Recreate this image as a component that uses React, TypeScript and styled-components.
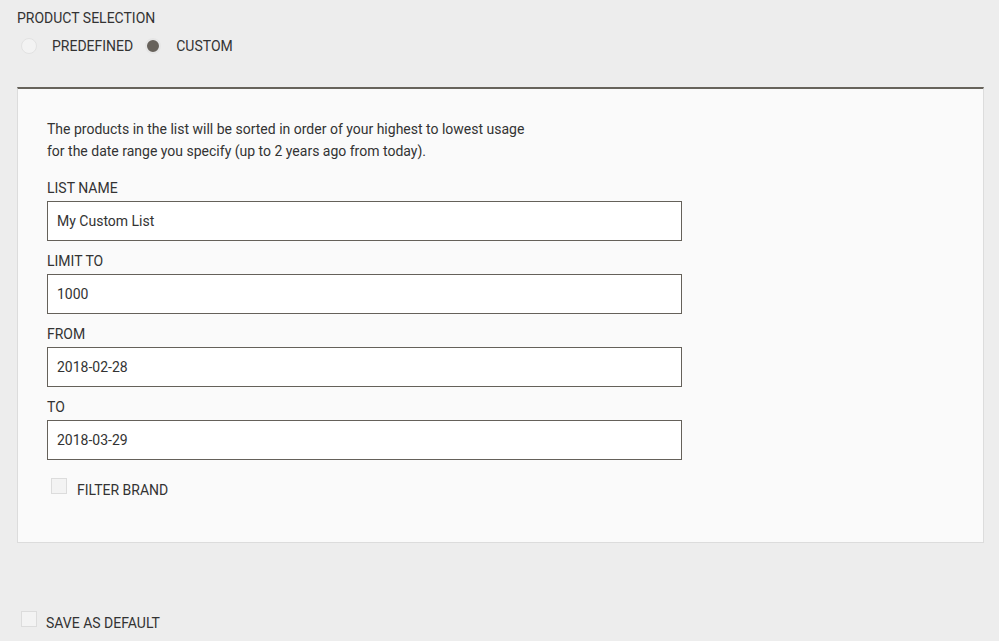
import * as React from 'react';
import styled, { createGlobalStyle } from 'styled-components';

const GlobalStyle = createGlobalStyle`
  body {
    margin: 0;
    background: #ededed;
    font-family: Roboto, "Liberation Sans", Arial, sans-serif;
    font-size: 14px;
    color: #333;
  }
`;

const Page = styled.div`
  padding: 10px 15px 0 17px;
`;

const SectionTitle = styled.div`
  line-height: 16px;
  text-transform: uppercase;
`;

const RadioRow = styled.div`
  display: flex;
  align-items: center;
  margin-top: 12px;
  margin-left: 4px;
  height: 16px;
`;

type RadioProps = {
  checked: boolean;
};

const RadioDot = styled.span`
  box-sizing: border-box;
  width: 16px;
  height: 16px;
  border-radius: 50%;
  border: ${({ checked }: RadioProps) =>
    checked ? '2px solid #e6e6e6' : '1px solid #e2e2e2'};
  background: ${({ checked }: RadioProps) => (checked ? '#67625b' : '#f3f3f3')};
  margin-right: 15px;
`;

const RadioLabel = styled.span`
  line-height: 16px;
  margin-right: 12px;
`;

const Panel = styled.div`
  margin-top: 33px;
  background: #fafafa;
  border: 1px solid #dcdcdc;
  border-top: 2px solid #67635b;
  padding: 29px 29px 44px 29px;
`;

const Description = styled.p`
  margin: 0;
  line-height: 22px;
`;

const Field = styled.div`
  margin-top: 12px;
  &:first-of-type {
    margin-top: 18px;
  }
`;

const FieldLabel = styled.label`
  display: block;
  line-height: 16px;
  margin-bottom: 5px;
`;

const TextInput = styled.input`
  box-sizing: border-box;
  display: block;
  width: 635px;
  height: 40px;
  border: 1px solid #65615a;
  background: #fff;
  padding: 0 9px;
  font-family: inherit;
  font-size: 14px;
  color: #333;
  outline: none;
`;

type CheckProps = {
  gap: number;
  offset: number;
};

const CheckRow = styled.label`
  display: flex;
  align-items: flex-start;
  margin-left: ${({ offset }: CheckProps) => offset}px;
  span:last-child {
    margin-left: ${({ gap }: CheckProps) => gap}px;
  }
`;

const CheckBox = styled.span`
  box-sizing: border-box;
  width: 16px;
  height: 16px;
  background: #f3f3f3;
  border: 1px solid #dcdcdc;
  flex-shrink: 0;
`;

const CheckLabel = styled.span`
  line-height: 16px;
  margin-top: 4px;
`;

const FilterRow = styled.div`
  margin-top: 18px;
`;

const Footer = styled.div`
  margin-top: 68px;
`;

export default function App() {
  const [selection, setSelection] = React.useState('custom');
  const fields = [
    { label: 'LIST NAME', value: 'My Custom List' },
    { label: 'LIMIT TO', value: '1000' },
    { label: 'FROM', value: '2018-02-28' },
    { label: 'TO', value: '2018-03-29' },
  ];

  return (
    <>
      <GlobalStyle />
      <Page>
        <SectionTitle>Product Selection</SectionTitle>
        <RadioRow>
          <RadioDot
            checked={selection === 'predefined'}
            onClick={() => setSelection('predefined')}
          />
          <RadioLabel>PREDEFINED</RadioLabel>
          <RadioDot
            checked={selection === 'custom'}
            onClick={() => setSelection('custom')}
          />
          <RadioLabel>CUSTOM</RadioLabel>
        </RadioRow>
        <Panel>
          <Description>
            The products in the list will be sorted in order of your highest to lowest usage
            <br />
            for the date range you specify (up to 2 years ago from today).
          </Description>
          {fields.map((f) => (
            <Field key={f.label}>
              <FieldLabel>{f.label}</FieldLabel>
              <TextInput defaultValue={f.value} />
            </Field>
          ))}
          <FilterRow>
            <CheckRow offset={4} gap={10}>
              <CheckBox />
              <CheckLabel>FILTER BRAND</CheckLabel>
            </CheckRow>
          </FilterRow>
        </Panel>
        <Footer>
          <CheckRow offset={4} gap={9}>
            <CheckBox />
            <CheckLabel>SAVE AS DEFAULT</CheckLabel>
          </CheckRow>
        </Footer>
      </Page>
    </>
  );
}
